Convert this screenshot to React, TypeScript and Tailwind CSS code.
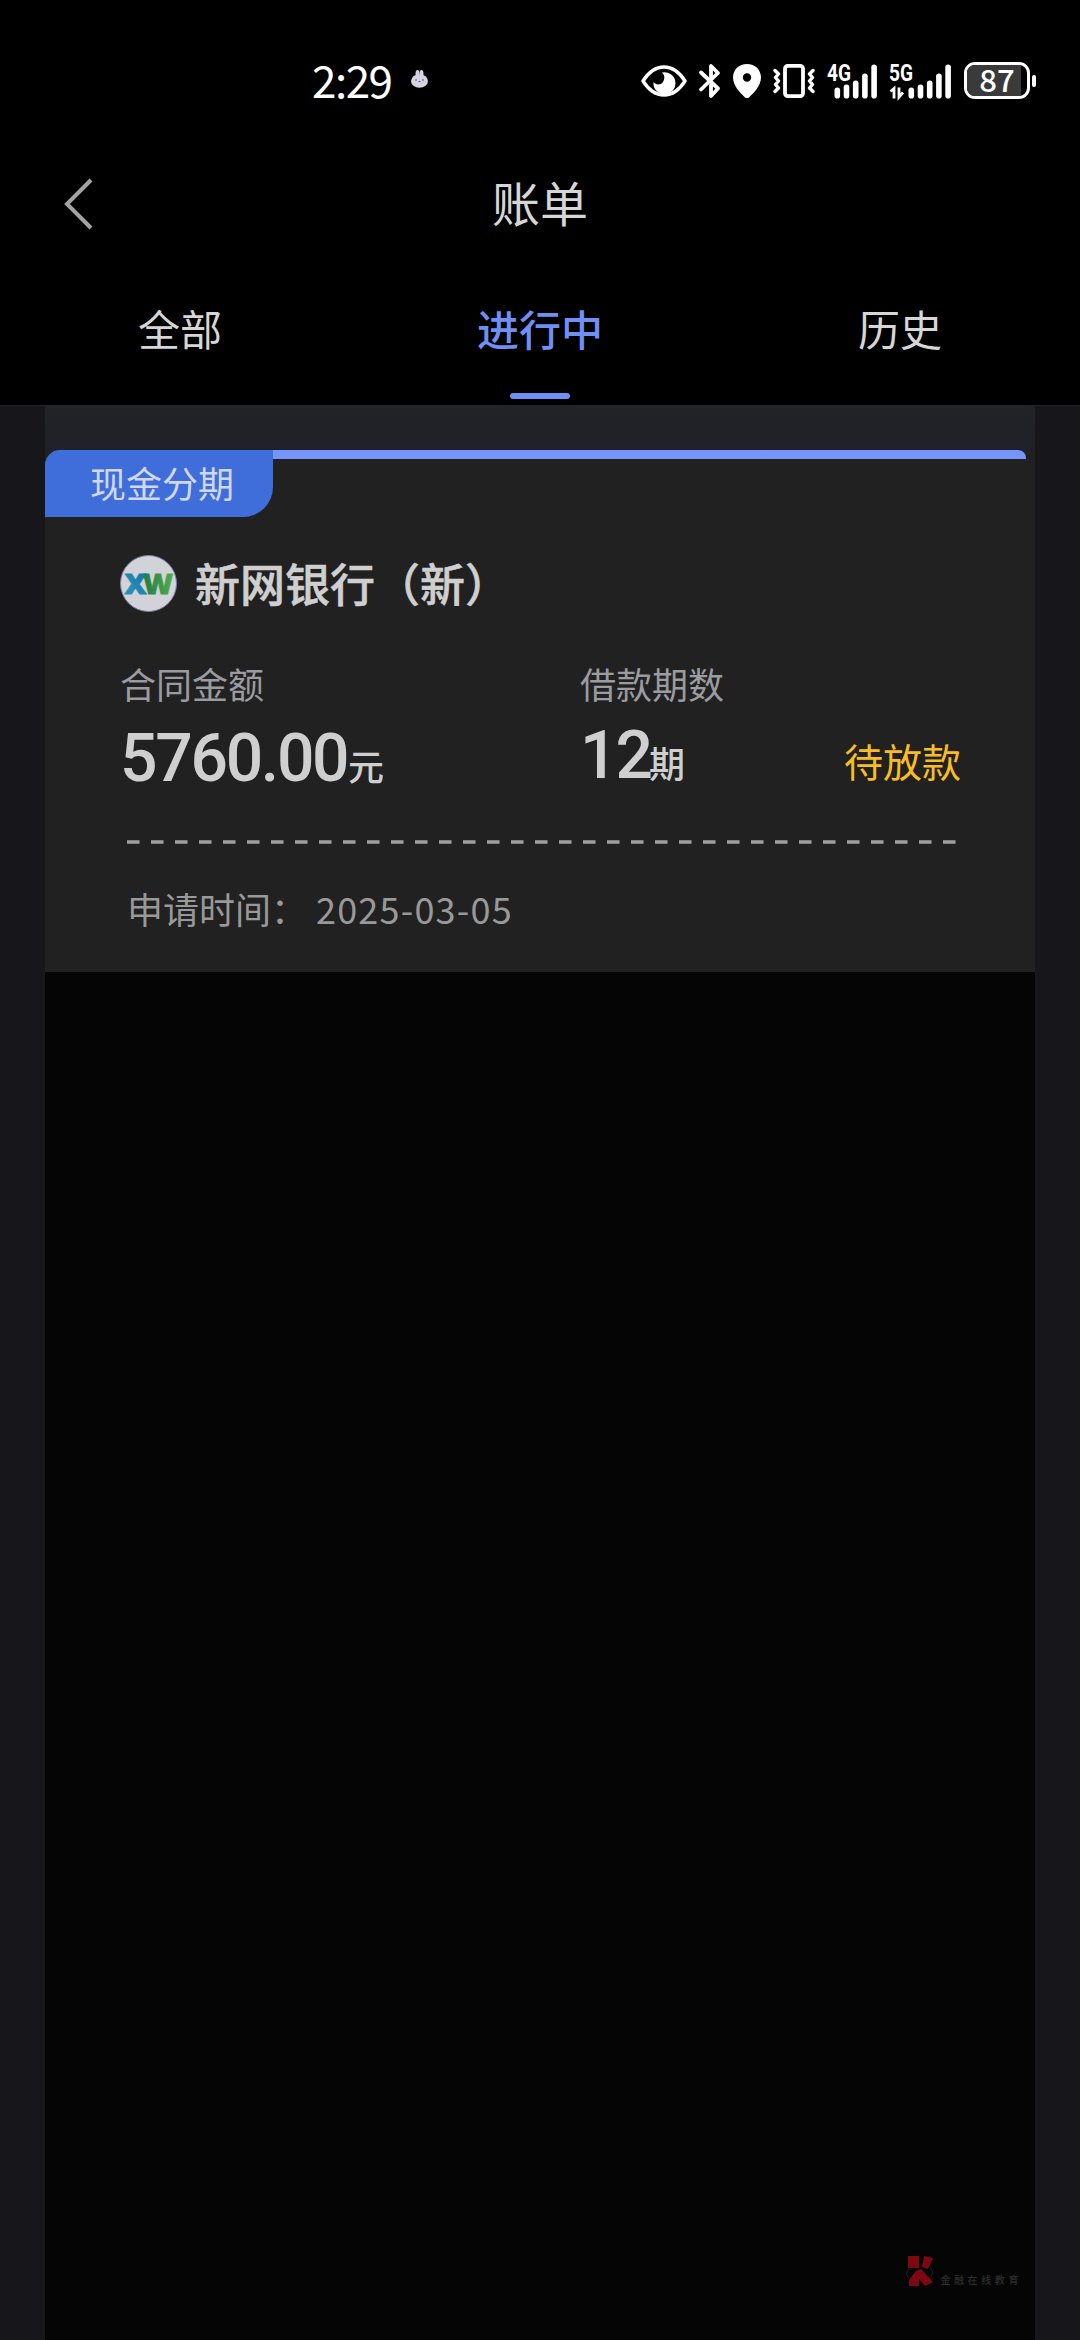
import { Fragment } from 'react';

const tabs = [
    { key: 'all', label: '全部' },
    { key: 'active', label: '进行中' },
    { key: 'history', label: '历史' },
];

const activeTab = 'active';

const bill = {
    type: '现金分期',
    bank: '新网银行（新）',
    amount: '5760.00',
    periods: '12',
    status: '待放款',
    date: '2025-03-05',
};

// Signal bars, left to right: height of each
const bars = [11, 14, 18, 25, 34];

function SignalBars() {
    return (
        <g fill="#fff">
            {bars.map((h, i) => (
                <rect key={h} x={i * 9.2} y={35.5 - h} width="5.6" height={h} rx="2.8" />
            ))}
        </g>
    );
}

function EyeIcon() {
    return (
        <svg className="h-8 w-[46px]" viewBox="0 0 46 32" fill="none">
            <path d="M2 16C8 6.500 15 2 23 2s15 4.500 21 14c-6 9.500-13 14-21 14S8 25.500 2 16Z" stroke="#fff" strokeWidth="3.400" strokeLinejoin="round" />
            <path d="M21 7.500a11 11 0 1 1-8.500 9.500c2 3.200 7 3.300 9.300.2 2.200-3 2.200-6.800-.8-9.700Z" fill="#fff" />
        </svg>
    );
}

function BluetoothIcon() {
    return (
        <svg className="h-[36px] w-[24px]" viewBox="0 0 24 36" fill="none" stroke="#fff" strokeWidth="3.800" strokeLinecap="round" strokeLinejoin="round">
            <path d="M3 9.500 20 25.500l-7 7.500V22.500M13 13.500V3l7 7L3 26.500" />
        </svg>
    );
}

function PinIcon() {
    return (
        <svg className="h-[34px] w-[28px]" viewBox="0 0 28 34">
            <path fillRule="evenodd" fill="#fff" d="M14 0c8 0 14 5.800 14 13.500C28 22 20.500 29 16.500 33a3.500 3.500 0 0 1-5 0C7.500 29 0 22 0 13.500 0 5.800 6 0 14 0Zm0 9.300a4.200 4.200 0 1 0 0 8.400 4.200 4.200 0 0 0 0-8.400Z" />
        </svg>
    );
}

function VibrateIcon() {
    return (
        <svg className="h-[34px] w-[42px]" viewBox="0 0 42 34" fill="none" stroke="#fff" strokeLinejoin="round" strokeLinecap="round">
            <rect x="12" y="1.800" width="18" height="30.400" rx="3" strokeWidth="3.800" />
            <path d="M2 6.500l3.500 3.500L2.500 13.500l3 3.500-3 3.500L5.500 24 2 27.500M40 6.500 36.500 10l3 3.500-3 3.500 3 3.500-3 3.500 3.500 3.500" strokeWidth="3.400" />
        </svg>
    );
}

function Signal4G() {
    return (
        <svg className="h-[36px] w-[51px] overflow-visible" viewBox="0 0 51 36">
            <text x="0" y="18" fontFamily="Roboto, sans-serif" fontWeight="700" fontSize="23" textLength="24" lengthAdjust="spacingAndGlyphs" fill="#fff">4G</text>
            <g transform="translate(7.500 0)">
                <SignalBars />
            </g>
        </svg>
    );
}

function Signal5G() {
    return (
        <svg className="h-[36px] w-[63px] overflow-visible" viewBox="0 0 63 36">
            <text x="0" y="18" fontFamily="Roboto, sans-serif" fontWeight="700" fontSize="23" textLength="24" lengthAdjust="spacingAndGlyphs" fill="#fff">5G</text>
            <path d="M1.500 28.500 5 25.500V35.500M10 24.500v9.500l4-4.500" fill="none" stroke="#fff" strokeWidth="2.800" />
            <g transform="translate(19.500 0)">
                <SignalBars />
            </g>
        </svg>
    );
}

function Battery() {
    return (
        <div className="flex items-center gap-[2px]">
            <div className="relative h-[37px] w-[66px] rounded-[11px] border-[3px] border-white">
                <div className="h-full w-[54px] rounded-l-[8px] bg-[#3a3a3a]" />
                <span className="absolute inset-x-0 -top-[8px] text-center font-['Noto_Sans_CJK_SC',sans-serif] text-[31px] leading-[44px] font-medium">87</span>
            </div>
            <div className="h-[12px] w-[4px] rounded-full bg-white" />
        </div>
    );
}

function StatusBar() {
    return (
        <div className="flex h-[136px] items-center pt-[25px] text-white">
            <span className="mt-[-4px] ml-[312px] w-[80px] font-['Noto_Sans_CJK_SC',sans-serif] text-[44px] leading-none font-normal tracking-[-1.500px]">2:29</span>
            {/* Notification mascot */}
            <svg className="mt-[-4px] ml-[18px] h-[20px] w-[20px]" viewBox="0 0 20 20">
                <ellipse cx="7.500" cy="5" rx="2" ry="4" fill="#d3d5e2" />
                <ellipse cx="11.500" cy="5" rx="2" ry="4" fill="#d3d5e2" />
                <ellipse cx="9.500" cy="12" rx="8.500" ry="6.800" fill="#d3d5e2" />
                <path d="M5 11h2M12 11h2M8.500 12.500h2" stroke="#555a6e" strokeWidth="1.200" />
            </svg>
            <div className="ml-[211px] flex items-center">
                <EyeIcon />
                <div className="ml-[11px]"><BluetoothIcon /></div>
                <div className="ml-[11px]"><PinIcon /></div>
                <div className="ml-[12px]"><VibrateIcon /></div>
                <div className="ml-[12px]"><Signal4G /></div>
                <div className="ml-[11px]"><Signal5G /></div>
                <div className="ml-[12px]"><Battery /></div>
            </div>
        </div>
    );
}

function BankLogo() {
    return (
        <svg className="h-[57px] w-[57px]" viewBox="0 0 57 57">
            <defs>
                <linearGradient id="logoX" x1="0" x2="1" y1="1" y2="0">
                    <stop offset="0" stopColor="#2a9cc4" />
                    <stop offset="1" stopColor="#1b6c9c" />
                </linearGradient>
                <linearGradient id="logoW">
                    <stop offset="0" stopColor="#217c45" />
                    <stop offset="1" stopColor="#52ab4c" />
                </linearGradient>
            </defs>
            <circle cx="28.500" cy="28.500" r="28" fill="#d2d3d8" stroke="#7b80a8" strokeWidth="1" />
            <g fontFamily="Open Sans, sans-serif" fontWeight="800" fontSize="28.500" strokeWidth="0.800">
                <text x="23" y="39" textLength="30" lengthAdjust="spacingAndGlyphs" fill="url(#logoW)" stroke="url(#logoW)">W</text>
                <text x="4.500" y="39" textLength="22" lengthAdjust="spacingAndGlyphs" fill="url(#logoX)" stroke="url(#logoX)">X</text>
            </g>
        </svg>
    );
}

function BillCard() {
    return (
        <section className="h-[566px] bg-[#212121]">
            <div className="h-[44px] bg-linear-to-b from-[#222325] to-[#1f2129]" />
            <div className="mr-[9px] ml-[100px] h-[9px] rounded-tr-[8px] bg-[#7595fa]" />
            <div className="-mt-[9px] flex h-[67px] w-[228px] items-center rounded-tl-[15px] rounded-br-[30px] bg-[#3f6dd9] pb-[3px] pl-[45px] text-[36px] font-normal text-[#cfd8ec]">
                {bill.type}
            </div>

            <div className="mt-[38px] ml-[75px] flex h-[57px] items-center gap-[18px]">
                <BankLogo />
                <h2 className="-mt-[3px] text-[45px] leading-none font-medium text-[#cfcfcf] [-webkit-text-stroke:0.6px_#cfcfcf]">{bill.bank}</h2>
            </div>

            <div className="mt-[46px] flex pl-[75px]">
                <div className="w-[460px]">
                    <p className="text-[36px] leading-[50px] font-normal text-[#9b9ba0]">合同金额</p>
                    <p className="mt-[18px] flex items-baseline text-[#cfcfcf]">
                        <span className="w-[228px] font-[Roboto] text-[66px] leading-[66px] font-medium tracking-[-2.300px]">{bill.amount}</span>
                        <span className="text-[36px] leading-none font-medium">元</span>
                    </p>
                </div>
                <div className="w-[264px]">
                    <p className="text-[36px] leading-[50px] font-normal text-[#9b9ba0]">借款期数</p>
                    <p className="mt-[15px] flex items-baseline text-[#cfcfcf]">
                        <span className="w-[69px] font-[Roboto] text-[66px] leading-[66px] font-medium tracking-[-2px]">{bill.periods}</span>
                        <span className="text-[36px] leading-none font-medium">期</span>
                    </p>
                </div>
                <span className="mt-[77px] text-[39px] leading-[50px] text-[#f9bd24]">{bill.status}</span>
            </div>

            <svg className="mt-[48px] ml-[82px] block h-[4px] w-[830px]" viewBox="0 0 830 4">
                <path d="M0 2h830" stroke="#a0a0a0" strokeWidth="3.500" strokeDasharray="12.500 11.500" />
            </svg>

            <div className="mt-[39px] ml-[82px] flex items-center text-[36px] leading-[50px] font-normal text-[#999]">
                <span className="w-[189px]">申请时间：</span>
                <span className="tracking-[1.200px]">{bill.date}</span>
            </div>
        </section>
    );
}

function Watermark() {
    return (
        <div className="absolute right-[13px] bottom-[53px] flex items-end gap-[5px]">
            <svg className="h-[32px] w-[30px]" viewBox="0 0 30 32">
                <path d="M3 1h11v12H3ZM19 1l9 2-5 11-6-2ZM11 16l5-2 12 13-8 4-6-7v7H4v-6Z" fill="#7d0810" />
                <path d="M5 14a5 5 0 0 0-1 9M25 13a5 5 0 0 1 1 8" fill="none" stroke="#222" strokeWidth="1" />
            </svg>
            <span className="text-[10px] leading-[14px] font-medium tracking-[3.600px] text-[#2e2e2e]">金融在线教育</span>
        </div>
    );
}

export default function App() {
    return (
        <div className="flex h-[2340px] w-[1080px] flex-col overflow-hidden bg-black font-['Noto_Sans_CJK_SC',sans-serif]">
            <StatusBar />

            <header className="grid h-[136px] grid-cols-[120px_1fr_120px] items-center text-[#d6d6d6]">
                <svg className="ml-[62px] h-[54px] w-[32px]" viewBox="0 0 32 54" fill="none">
                    <path d="M29 3 5 27l24 24" stroke="#a3a3a3" strokeWidth="4" />
                </svg>
                <h1 className="-mt-[6px] text-center text-[48px] leading-none font-normal">账单</h1>
            </header>

            <nav className="grid h-[133px] grid-cols-3">
                {tabs.map((tab) => (
                    <Fragment key={tab.key}>
                        {tab.key === activeTab ? (
                            <button type="button" className="flex flex-col items-center pt-[25px] text-[42px] leading-[62px] font-medium text-[#6f8ff5]">
                                {tab.label}
                                <span className="mt-[34px] h-[6px] w-[60px] rounded-full bg-[#6f8ff5]" />
                            </button>
                        ) : (
                            <button type="button" className="flex flex-col items-center pt-[25px] text-[42px] leading-[62px] font-normal text-[#d6d6d6]">
                                {tab.label}
                            </button>
                        )}
                    </Fragment>
                ))}
            </nav>

            <main className="flex-1 border-t border-[#222] bg-[#16161b] px-[45px]">
                <div className="relative h-full bg-[#050505]">
                    <BillCard />
                    <Watermark />
                </div>
            </main>
        </div>
    );
}
